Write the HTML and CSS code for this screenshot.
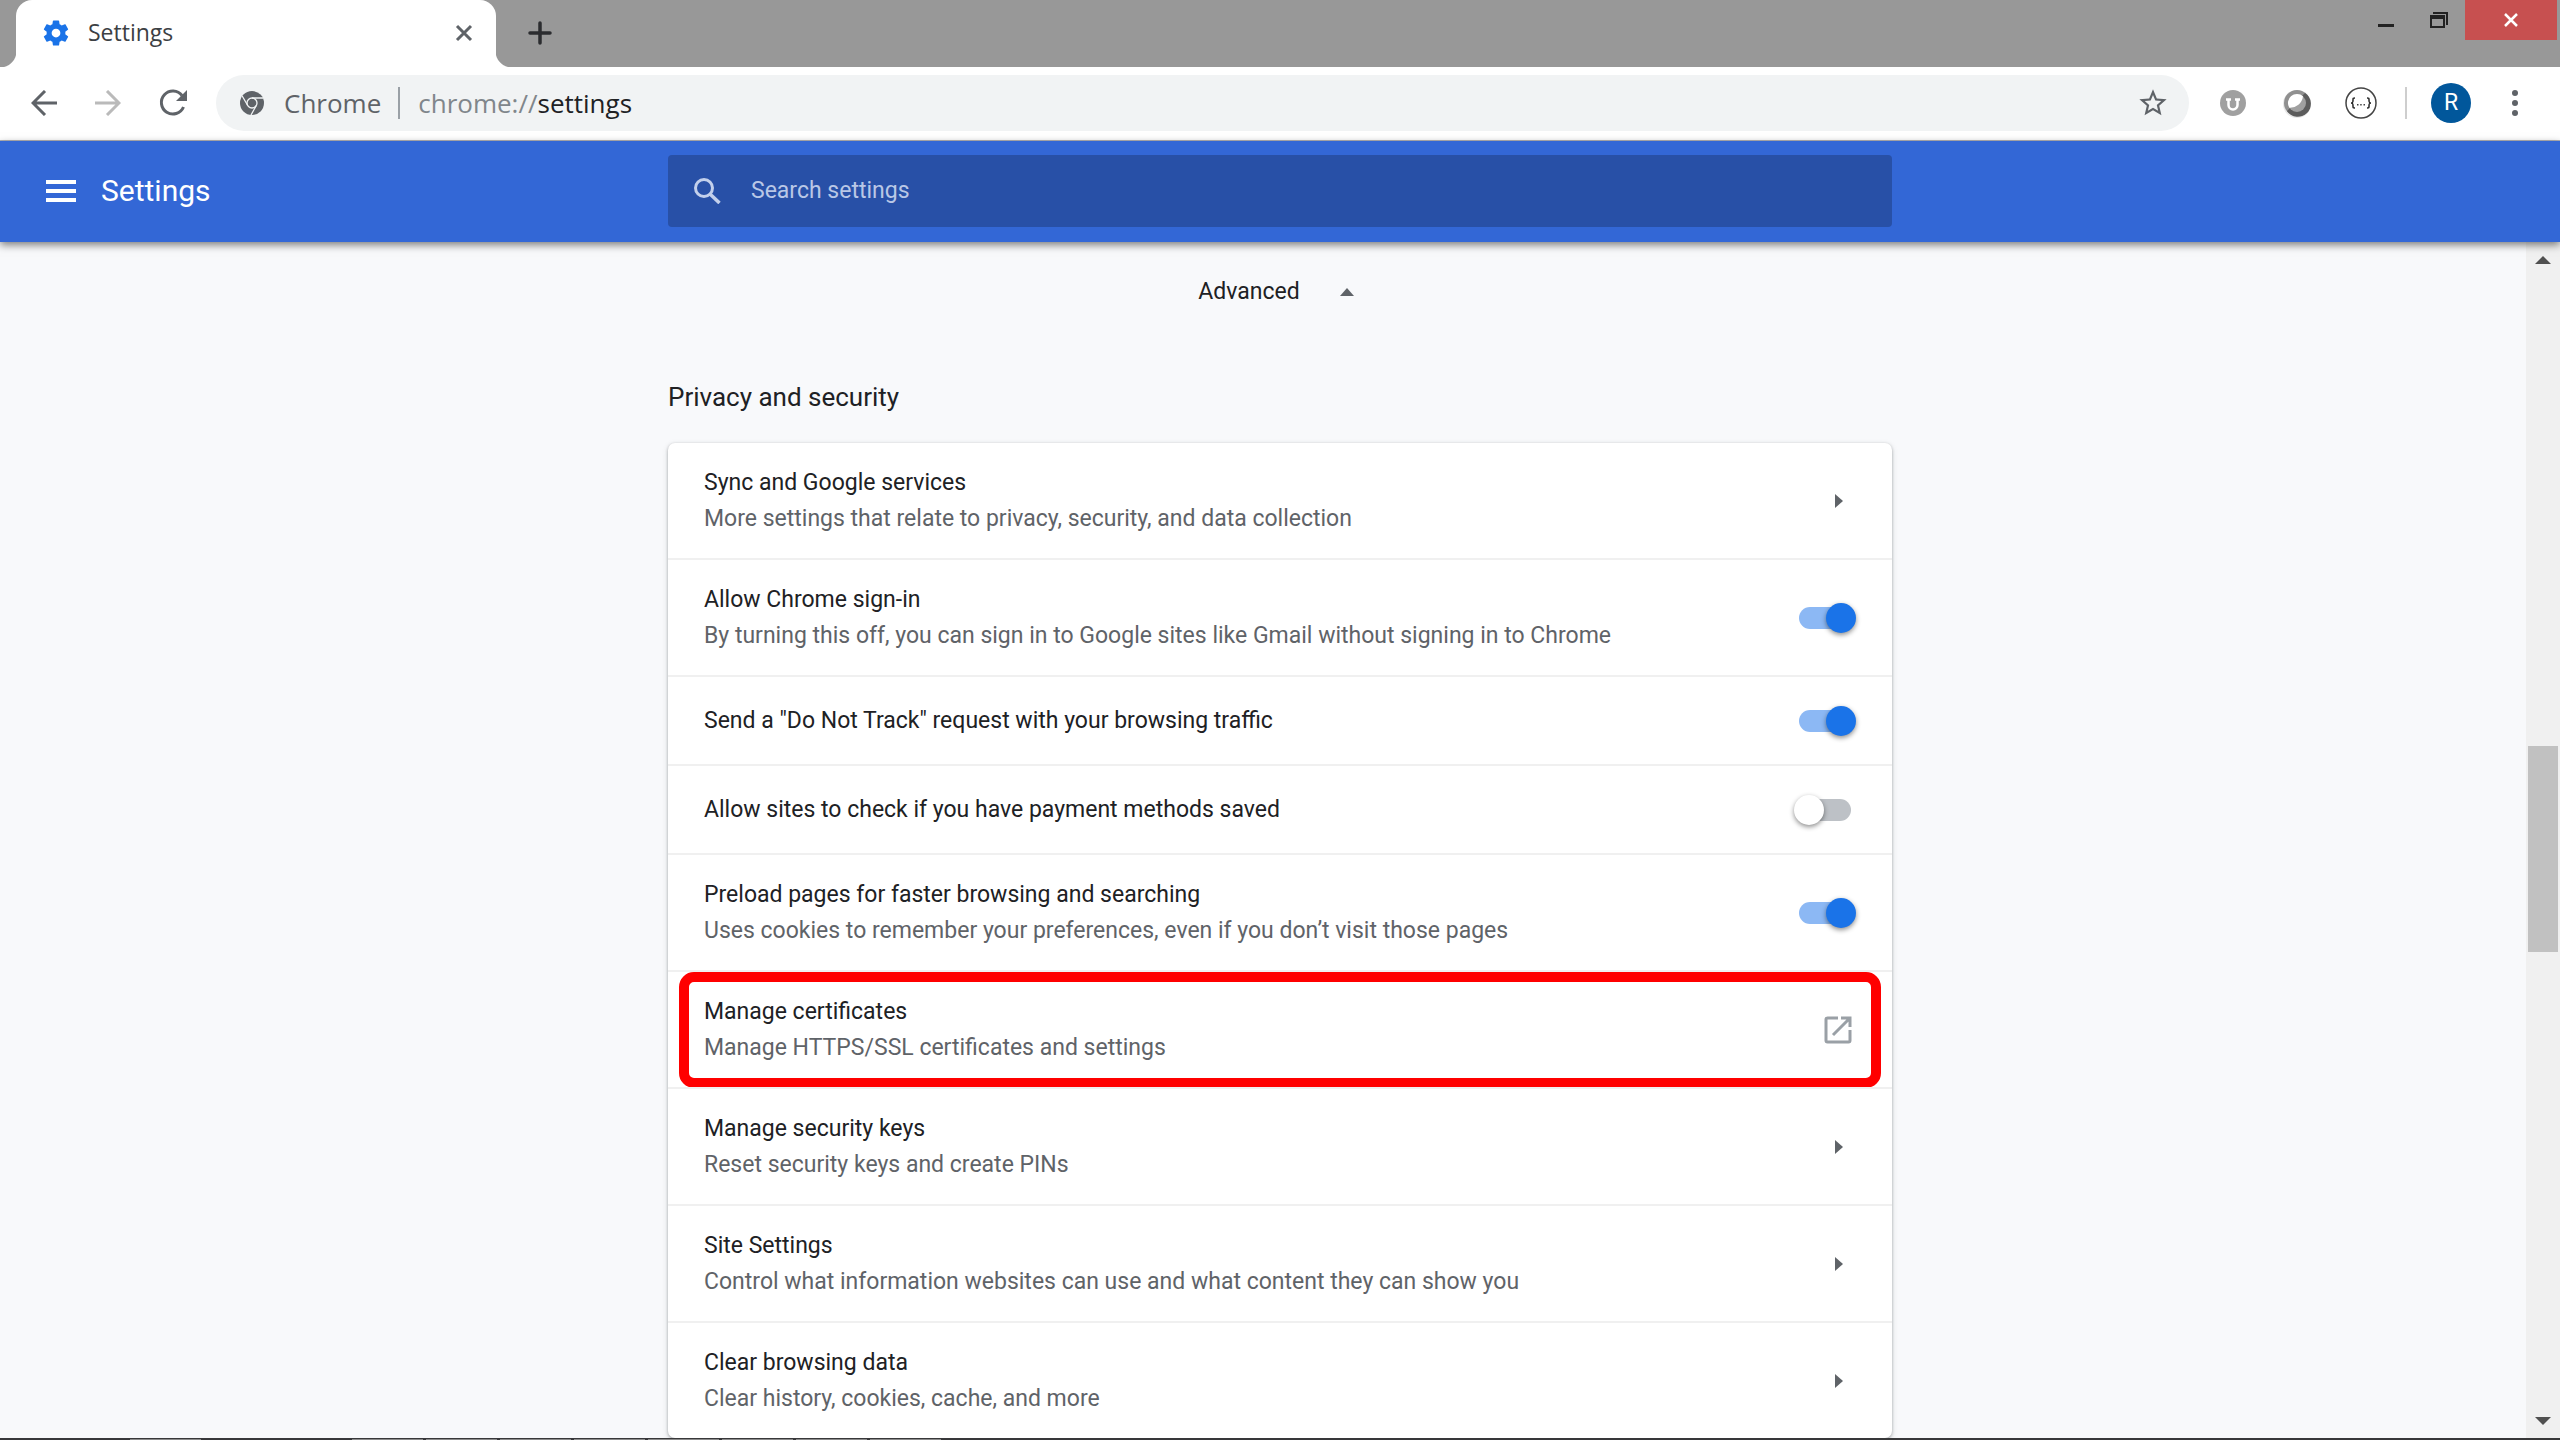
FILE: index.html
```html
<!DOCTYPE html>
<html lang="en">
<head>
<meta charset="utf-8">
<title>Settings</title>
<link rel="stylesheet" href="styles.css">
</head>
<body>
<header class="tabstrip">
  <div class="tab">
    <svg class="tab-icon" viewBox="0 0 24 24" aria-hidden="true"><path fill="#1a73e8" d="M19.43 12.98c.04-.32.07-.64.07-.98s-.03-.66-.07-.98l2.11-1.65c.19-.15.24-.42.12-.64l-2-3.46c-.12-.22-.39-.3-.61-.22l-2.49 1c-.52-.4-1.08-.73-1.69-.98l-.38-2.65A.488.488 0 0 0 14 2h-4c-.25 0-.46.18-.49.42l-.38 2.65c-.61.25-1.17.59-1.69.98l-2.49-1c-.23-.09-.49 0-.61.22l-2 3.46c-.13.22-.07.49.12.64l2.11 1.65c-.04.32-.07.65-.07.98s.03.66.07.98l-2.11 1.65c-.19.15-.24.42-.12.64l2 3.46c.12.22.39.3.61.22l2.49-1c.52.4 1.08.73 1.69.98l.38 2.65c.03.24.24.42.49.42h4c.25 0 .46-.18.49-.42l.38-2.65c.61-.25 1.17-.59 1.69-.98l2.49 1c.23.09.49 0 .61-.22l2-3.46c.12-.22.07-.49-.12-.64l-2.11-1.65zM12 15.500a3.500 3.500 0 1 1 0-7 3.500 3.500 0 0 1 0 7z"/></svg>
    <span class="tab-title">Settings</span>
    <button class="plain tab-close" type="button" aria-label="Close tab"><svg width="18" height="18" viewBox="0 0 18 18"><path d="M2 2l14 14M16 2L2 16" stroke="#5f6368" stroke-width="3" fill="none"/></svg></button>
  </div>
  <button class="plain new-tab" type="button" aria-label="New tab"><svg width="24" height="24" viewBox="0 0 24 24"><path d="M12 2v20M2 12h20" stroke="#2b2c2f" stroke-width="3.500" stroke-linecap="round" fill="none"/></svg></button>
  <div class="window-buttons">
    <button class="plain win" type="button" aria-label="Minimize"><svg width="16" height="18" viewBox="0 0 16 18"><path d="M0 13h16v3H0z" fill="#222"/></svg></button>
    <button class="plain win" type="button" aria-label="Restore"><svg width="18" height="18" viewBox="0 0 18 18"><path d="M3 1h15v13h-2V3H3zM0 4h15v13H0zM2 8v7h11V8z" fill="#222" fill-rule="evenodd"/></svg></button>
    <button class="plain win win-close" type="button" aria-label="Close"><svg width="14" height="14" viewBox="0 0 14 14"><path d="M1 1l12 12M13 1L1 13" stroke="#fff" stroke-width="2.500" fill="none"/></svg></button>
  </div>
</header>

<nav class="toolbar" aria-label="Browser toolbar">
  <div class="nav-buttons">
    <button class="plain nav-button" type="button" aria-label="Back"><svg width="26" height="26" viewBox="0 0 26 26"><path d="M26 13H2M14 1L2 13l12 12" stroke="#5f6368" stroke-width="3" fill="none"/></svg></button>
    <button class="plain nav-button" type="button" aria-label="Forward"><svg width="26" height="26" viewBox="0 0 26 26"><path d="M0 13h24M12 1l12 12-12 12" stroke="#bababa" stroke-width="3" fill="none"/></svg></button>
    <button class="plain nav-button" type="button" aria-label="Reload"><svg width="28" height="28" viewBox="0 0 28 28"><path d="M24.500 18A11.500 11.500 0 1 1 23 6.500" stroke="#5f6368" stroke-width="3" fill="none"/><path d="M28 1v11H17z" fill="#5f6368"/></svg></button>
  </div>
  <div class="omnibox">
    <svg width="24" height="24" viewBox="0 0 24 24" aria-hidden="true"><circle cx="12" cy="12" r="12" fill="#5f6368"/><g fill="none" stroke="#f1f3f4" stroke-width="1.300"><circle cx="12" cy="12" r="5"/><path d="M12 7h11M7.700 14.500L2.200 5M16.300 14.500L11 24"/></g></svg>
    <span class="chip">Chrome</span>
    <div class="url" role="textbox" aria-label="Address" contenteditable="true" spellcheck="false"><span class="scheme">chrome://</span>settings</div>
    <button class="plain star" type="button" aria-label="Bookmark this page"><svg width="30" height="30" viewBox="1 1 22 22"><path fill="#5f6368" d="M22 9.240l-7.190-.62L12 2 9.190 8.630 2 9.240l5.460 4.730L5.820 21 12 17.270 18.180 21l-1.630-7.030L22 9.240zM12 15.400l-3.760 2.270 1-4.280-3.320-2.880 4.380-.38L12 6.100l1.710 4.040 4.380.38-3.320 2.880 1 4.280L12 15.400z"/></svg></button>
  </div>
  <div class="extensions">
    <button class="plain ext" type="button" aria-label="Extension U"><svg width="32" height="32" viewBox="0 0 32 32"><circle cx="16" cy="16" r="13" fill="#a0a0a0"/><path d="M9 12.500h5M18 12.500h5M11.500 12.500v5.500a4.500 4.500 0 0 0 9 0v-5.500" stroke="#fff" stroke-width="2.500" fill="none"/></svg></button>
    <button class="plain ext" type="button" aria-label="Extension circle"><svg width="32" height="32" viewBox="0 0 32 32"><circle cx="16" cy="17" r="14" fill="#e8e8e8"/><circle cx="16" cy="16" r="13" fill="#909090"/><path d="M24 6A13 13 0 1 1 6 24z" fill="#5c5c5c"/><circle cx="16" cy="16" r="9" fill="#a0a0a0"/><path d="M22 9.300A13 13 0 0 1 8.300 20.700 9 9 0 0 1 22 9.300z" fill="#fff"/></svg></button>
    <button class="plain ext" type="button" aria-label="Extension braces"><svg width="32" height="32" viewBox="0 0 32 32"><circle cx="16" cy="16" r="15" fill="#fff" stroke="#444" stroke-width="1.500"/><path d="M10 11c-2 0-2 0-2 2 0 2 0 3-2 3 2 0 2 1 2 3 0 2 0 2 2 2M22 11c2 0 2 0 2 2 0 2 0 3 2 3-2 0-2 1-2 3 0 2 0 2-2 2" stroke="#222" stroke-width="1.500" fill="none"/><path d="M12 17h1.500v1.500H12zM15.200 17h1.500v1.500h-1.500zM18.500 17H20v1.500h-1.500z" fill="#444"/></svg></button>
  </div>
  <span class="divider"></span>
  <button class="plain avatar" type="button" aria-label="Profile R">R</button>
  <button class="plain menu" type="button" aria-label="Menu"><svg width="6" height="26" viewBox="0 0 6 26"><g fill="#5f6368"><circle cx="3" cy="3" r="3"/><circle cx="3" cy="13" r="3"/><circle cx="3" cy="23" r="3"/></g></svg></button>
</nav>

<div class="appbar">
  <div class="brand">
    <button class="plain" type="button" aria-label="Main menu"><svg width="30" height="22" viewBox="0 0 30 22"><path d="M0 0h30v4H0zM0 9h30v4H0zM0 18h30v4H0z" fill="#fff"/></svg></button>
    <h1 class="brand-title">Settings</h1>
  </div>
  <label class="search">
    <svg width="27" height="26" viewBox="0 0 27 26" aria-hidden="true"><circle cx="10" cy="10" r="8.500" stroke="#c3d0ec" stroke-width="3" fill="none"/><path d="M16 16l9.500 9" stroke="#c3d0ec" stroke-width="3.500"/></svg>
    <input class="search-input" type="search" placeholder="Search settings" aria-label="Search settings">
  </label>
</div>

<div class="viewport">
  <main class="content">
    <button class="plain advanced" type="button">Advanced <svg width="14" height="8" viewBox="0 0 14 8"><path d="M0 8l7-8 7 8z" fill="#5f6368"/></svg></button>
    <h2 class="section-title">Privacy and security</h2>
    <div class="card">
      <a class="row" href="#sync"><span class="text"><span class="title">Sync and Google services</span><span class="sub">More settings that relate to privacy, security, and data collection</span></span><span class="arrow"></span></a>
      <label class="row"><span class="text"><span class="title">Allow Chrome sign-in</span><span class="sub">By turning this off, you can sign in to Google sites like Gmail without signing in to Chrome</span></span><input class="toggle" type="checkbox" checked></label>
      <label class="row"><span class="text"><span class="title">Send a "Do Not Track" request with your browsing traffic</span></span><input class="toggle" type="checkbox" checked></label>
      <label class="row"><span class="text"><span class="title">Allow sites to check if you have payment methods saved</span></span><input class="toggle" type="checkbox"></label>
      <label class="row"><span class="text"><span class="title">Preload pages for faster browsing and searching</span><span class="sub">Uses cookies to remember your preferences, even if you don’t visit those pages</span></span><input class="toggle" type="checkbox" checked></label>
      <a class="row highlighted" href="#certificates"><span class="text"><span class="title">Manage certificates</span><span class="sub">Manage HTTPS/SSL certificates and settings</span></span><svg class="external" width="28" height="28" viewBox="0 0 28 28"><g fill="none" stroke="#9aa0a6" stroke-width="3"><path d="M14 2H3.500Q2 2 2 3.500v21Q2 26 3.500 26h21q1.500 0 1.500-1.500V14M17 2h9v9M26 2L9 19"/></g></svg></a>
      <a class="row" href="#keys"><span class="text"><span class="title">Manage security keys</span><span class="sub">Reset security keys and create PINs</span></span><span class="arrow"></span></a>
      <a class="row" href="#site"><span class="text"><span class="title">Site Settings</span><span class="sub">Control what information websites can use and what content they can show you</span></span><span class="arrow"></span></a>
      <a class="row" href="#clear"><span class="text"><span class="title">Clear browsing data</span><span class="sub">Clear history, cookies, cache, and more</span></span><span class="arrow"></span></a>
    </div>
  </main>
  <div class="scrollbar" aria-hidden="true">
    <svg width="16" height="8" viewBox="0 0 16 8"><path d="M0 8l8-8 8 8z" fill="#505050"/></svg>
    <div class="track"><div class="thumb"></div></div>
    <svg width="16" height="8" viewBox="0 0 16 8"><path d="M0 0l8 8 8-8z" fill="#505050"/></svg>
  </div>
</div>
<footer class="taskbar"><span class="task task-first"></span><span class="task"></span><span class="task"></span><span class="task"></span><span class="task"></span><span class="task"></span><span class="task"></span><span class="task"></span><span class="task"></span></footer>
</body>
</html>
```

FILE: styles.css
```css
* { box-sizing: border-box; }

body {
  margin: 0;
  height: 100vh;
  display: flex;
  flex-direction: column;
  overflow: hidden;
  font-family: Roboto, sans-serif;
  font-size: 23px;
  line-height: 36px;
  color: #202124;
  background: #f8f9fb;
}

svg { display: block; flex: none; }

.plain {
  display: flex;
  align-items: center;
  justify-content: center;
  margin: 0;
  padding: 0;
  border: 0;
  background: none;
  color: inherit;
  font: inherit;
}

/* Tab strip */
.tabstrip {
  flex: none;
  height: 67px;
  display: flex;
  align-items: flex-start;
  background: #989898;
  font-family: "Open Sans", "Noto Sans", sans-serif;
}

.tab {
  position: relative;
  width: 480px;
  height: 67px;
  margin-left: 16px;
  padding: 0 23px 2px 25px;
  display: flex;
  align-items: center;
  background: #fff;
  border-radius: 16px 16px 0 0;
}

.tab::before,
.tab::after {
  content: "";
  position: absolute;
  bottom: 0;
  width: 16px;
  height: 16px;
}

.tab::before { right: 100%; background: radial-gradient(circle at 0 0, transparent 16px, #fff 17px); }
.tab::after { left: 100%; background: radial-gradient(circle at 100% 0, transparent 16px, #fff 17px); }

.tab-icon { width: 30px; height: 30px; }
.tab-title { flex: 1; margin-left: 17px; font-size: 23px; line-height: 32px; padding-bottom: 2px; color: #3c4043; }
.new-tab { width: 24px; height: 66px; margin-left: 32px; }
.window-buttons { display: flex; margin-left: auto; margin-right: 3px; }
.win { width: 53px; height: 40px; }
.win-close { width: 92px; background: #c75050; }

/* Toolbar */
.toolbar {
  flex: none;
  height: 74px;
  padding: 0 42px 2px 31px;
  display: flex;
  align-items: center;
  border-bottom: 1px solid #b6b4b6;
  background: #fff;
  font-family: "Open Sans", "Noto Sans", sans-serif;
}

.nav-buttons { display: flex; gap: 38px; }

.omnibox {
  flex: 1;
  height: 56px;
  margin-left: 29px;
  padding: 0 21px 0 24px;
  display: flex;
  align-items: center;
  border-radius: 28px;
  background: #f1f3f4;
  font-size: 26px;
}

.chip {
  margin-left: 20px;
  padding-right: 17px;
  border-right: 2px solid #9aa0a6;
  line-height: 32px;
  color: #5f6368;
}

.url { flex: 1; margin-left: 18px; outline: 0; }
.scheme { color: #80868b; }
.extensions { display: flex; gap: 32px; margin-left: 28px; }
.divider { width: 2px; height: 32px; margin-left: 28px; background: #cecece; }

.avatar {
  width: 40px;
  height: 40px;
  margin-left: 24px;
  border-radius: 50%;
  background: #01579b;
  color: #fff;
  font-family: Roboto, sans-serif;
  font-size: 23px;
}

.menu { margin-left: 41px; }

/* Settings header */
.appbar {
  position: relative;
  z-index: 1;
  flex: none;
  height: 101px;
  padding-bottom: 1px;
  display: grid;
  grid-template-columns: 1fr 1224px 1fr;
  align-items: center;
  background: #3367d6;
  box-shadow: 0 3px 8px rgba(0, 0, 0, .5);
}

.brand { display: flex; align-items: center; gap: 25px; padding-left: 46px; color: #fff; }
.brand-title { margin: 0; font-size: 30px; font-weight: 400; }

.search {
  height: 72px;
  padding: 0 26px;
  display: flex;
  align-items: center;
  gap: 30px;
  border-radius: 4px;
  background: #2850a7;
}

.search-input {
  flex: 1;
  padding: 0;
  border: 0;
  outline: 0;
  background: none;
  color: #fff;
  font: inherit;
}

.search-input::placeholder { color: #b9c7e6; opacity: 1; }

/* Page */
.viewport { flex: 1; min-height: 0; display: flex; overflow: hidden; }

.content {
  flex: 1;
  display: flex;
  flex-direction: column;
  align-items: center;
  padding: 32px 0 0 34px;
}

.advanced { gap: 40px; padding-right: 8px; }

.section-title {
  width: 1224px;
  margin: 69px 0 28px;
  font-size: 26px;
  font-weight: 400;
}

.card {
  width: 1224px;
  border-radius: 7px;
  background: #fff;
  box-shadow: 0 1px 3px rgba(60, 64, 67, .4), 0 2px 6px rgba(60, 64, 67, .15);
}

.row {
  position: relative;
  min-height: 89px;
  padding: 22px 36px 21px;
  display: flex;
  align-items: center;
  justify-content: space-between;
  color: inherit;
  text-decoration: none;
}

.row + .row { border-top: 2px solid #f0f0f0; }

.text { display: flex; flex-direction: column; }
.sub { color: #5f6368; }

.arrow {
  margin-right: 13px;
  border-left: 8px solid #5f6368;
  border-top: 7px solid transparent;
  border-bottom: 7px solid transparent;
}

.external { margin-right: 4px; }

.highlighted::after {
  content: "";
  position: absolute;
  inset: 0 11px -1px;
  border: 10px solid #f00;
  border-radius: 15px;
}

.toggle {
  appearance: none;
  position: relative;
  width: 52px;
  height: 22px;
  margin: 0 5px 0 0;
  border-radius: 11px;
  background: #bdc1c6;
}

.toggle::before {
  content: "";
  position: absolute;
  left: -5px;
  top: -4px;
  width: 30px;
  height: 30px;
  border-radius: 50%;
  background: #fff;
  box-shadow: 0 2px 5px rgba(0, 0, 0, .45);
}

.toggle:checked { background: #8cb8f4; }
.toggle:checked::before { left: 27px; background: #1a73e8; }

.scrollbar {
  width: 34px;
  padding: 14px 2px 13px;
  display: flex;
  flex-direction: column;
  align-items: center;
  background: #f0f0f0;
}

.track { flex: 1; width: 100%; padding-top: 482px; }
.thumb { height: 206px; background: #c1c1c1; }

.taskbar {
  position: relative;
  z-index: 1;
  flex: none;
  height: 2px;
  padding-left: 130px;
  display: flex;
  gap: 3px;
  background: #38383a;
}

.task { width: 71px; height: 1px; margin-top: 1px; background: #8c8c8c; }
.task-first { margin-right: 148px; }
```
